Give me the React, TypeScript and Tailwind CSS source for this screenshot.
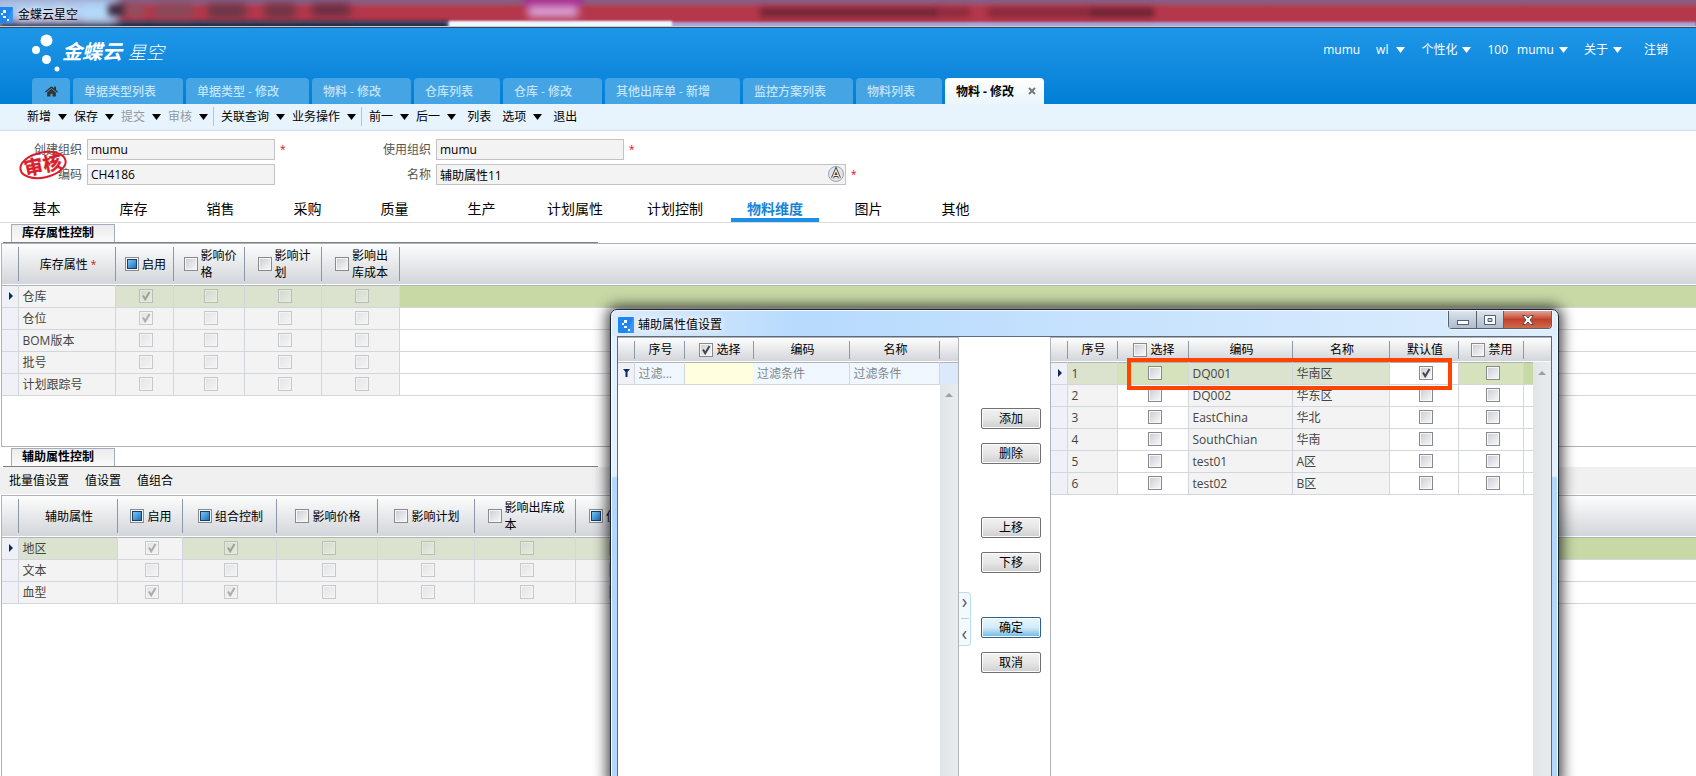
import React from "react";
import { FaHome } from "react-icons/fa";

const FONT = "font-['Open_Sans','Noto_Sans_CJK_SC',sans-serif]";

const openTabs = [
  { name: "单据类型列表", width: "w-[110px]" },
  { name: "单据类型 - 修改", width: "w-[123px]" },
  { name: "物料 - 修改", width: "w-[99px]" },
  { name: "仓库列表", width: "w-[86px]" },
  { name: "仓库 - 修改", width: "w-[99px]" },
  { name: "其他出库单 - 新增", width: "w-[135px]" },
  { name: "监控方案列表", width: "w-[110px]" },
  { name: "物料列表", width: "w-[86px]" },
];

const toolbar = [
  [
    { name: "新增", menu: true },
    { name: "保存", menu: true },
    { name: "提交", menu: true, off: true },
    { name: "审核", menu: true, off: true },
  ],
  [
    { name: "关联查询", menu: true },
    { name: "业务操作", menu: true },
  ],
  [
    { name: "前一", menu: true },
    { name: "后一", menu: true },
    { name: "列表" },
    { name: "选项", menu: true },
    { name: "退出" },
  ],
];

const sections = [
  "基本",
  "库存",
  "销售",
  "采购",
  "质量",
  "生产",
  "计划属性",
  "计划控制",
  "物料维度",
  "图片",
  "其他",
];

type Column = {
  name: string;
  width: string;
  box?: "off" | "on" | "mixed";
  text?: string;
  required?: boolean;
};

const stockColumns: Column[] = [
  { name: "库存属性", width: "w-[97px]", required: true },
  { name: "启用", width: "w-[58px]", box: "mixed" },
  { name: "影响价格", width: "w-[71px]", box: "off", text: "w-9" },
  { name: "影响计划", width: "w-[77px]", box: "off", text: "w-9" },
  { name: "影响出库成本", width: "w-[78px]", box: "off", text: "w-9" },
];

const stockRows = [
  { name: "仓库", checks: [true, false, false, false] },
  { name: "仓位", checks: [true, false, false, false] },
  { name: "BOM版本", checks: [false, false, false, false] },
  { name: "批号", checks: [false, false, false, false] },
  { name: "计划跟踪号", checks: [false, false, false, false] },
];

const auxColumns: Column[] = [
  { name: "辅助属性", width: "w-[99px]" },
  { name: "启用", width: "w-[65px]", box: "mixed" },
  { name: "组合控制", width: "w-[94px]", box: "mixed" },
  { name: "影响价格", width: "w-[101px]", box: "off" },
  { name: "影响计划", width: "w-[97px]", box: "off" },
  { name: "影响出库成本", width: "w-[101px]", box: "off", text: "w-[60px]" },
  { name: "值必录", width: "w-[78px]", box: "mixed" },
];

const auxRows = [
  { name: "地区", checks: [true, true, false, false, false, false] },
  { name: "文本", checks: [false, false, false, false, false, false] },
  { name: "血型", checks: [true, true, false, false, false, false] },
];

const sourceColumns: Column[] = [
  { name: "序号", width: "w-[50px]" },
  { name: "选择", width: "w-[69px]", box: "on" },
  { name: "编码", width: "w-[96px]" },
  { name: "名称", width: "w-[90px]" },
];

const valueColumns: Column[] = [
  { name: "序号", width: "w-[50px]" },
  { name: "选择", width: "w-[71px]", box: "off" },
  { name: "编码", width: "w-[104px]" },
  { name: "名称", width: "w-[97px]" },
  { name: "默认值", width: "w-[69px]" },
  { name: "禁用", width: "w-[65px]", box: "off" },
];

const valueRows = [
  { code: "DQ001", name: "华南区", preset: true },
  { code: "DQ002", name: "华东区", preset: false },
  { code: "EastChina", name: "华北", preset: false },
  { code: "SouthChian", name: "华南", preset: false },
  { code: "test01", name: "A区", preset: false },
  { code: "test02", name: "B区", preset: false },
];

const Caret = () => (
  <svg viewBox="0 0 9 6" className="h-[6px] w-[9px]" fill="currentColor">
    <path d="M0 0h9L4.5 6z" />
  </svg>
);

const Star = () => (
  <span className="text-[10px] leading-[17px] text-red-600">*</span>
);

const AppIcon = ({ className }: { className: string }) => (
  <svg viewBox="0 0 16 16" className={className}>
    <rect width="16" height="16" rx="1" fill="#1f86ee" />
    <path d="M16 0v16H9z" fill="#4ba1f6" opacity=".5" />
    <g fill="#fff">
      <rect x="6" y="3" width="3" height="3" />
      <rect x="4" y="6" width="2" height="2" />
      <rect x="6" y="9" width="3" height="2" />
      <rect x="10" y="12" width="2" height="2" />
    </g>
  </svg>
);

const Check = ({
  label,
  state = "off",
  disabled = false,
}: {
  label: string;
  state?: "off" | "on" | "mixed";
  disabled?: boolean;
}) => (
  <span
    className={`relative inline-block size-[14px] shrink-0 ${disabled ? "opacity-40" : ""}`}
  >
    <input
      type="checkbox"
      aria-label={label}
      defaultChecked={state === "on"}
      disabled={disabled}
      className="block size-[14px] appearance-none border border-[#8a8a8a] bg-linear-to-br from-[#c9ccd4] to-[#fafafa] shadow-[inset_0_0_0_1px_#f6f6f6]"
    />
    {state === "mixed" && (
      <span className="pointer-events-none absolute inset-[2px] border border-[#15406d] bg-linear-to-br from-[#7cc4f0] to-[#1273c4]" />
    )}
    {state === "on" && (
      <svg
        viewBox="0 0 14 14"
        className="pointer-events-none absolute inset-0"
        fill="none"
        stroke={disabled ? "#444" : "#45474d"}
        strokeWidth="2"
      >
        <path d="M4 6.5l2.2 3.8L10.5 3" />
      </svg>
    )}
  </span>
);

const HeadRow = ({ columns, tall }: { columns: Column[]; tall?: boolean }) => {
  const size = tall ? "h-[34px]" : "h-[18px]";
  return (
    <thead>
      <tr
        className={`border-b border-[#b0b3b8] bg-linear-to-b from-[#fdfdfd] to-[#d2d5da] text-black ${tall ? "h-[41px]" : "h-[24px]"}`}
      >
        <th className="w-[16px] p-0">
          <div className={`-mr-px border-r border-[#8d97a5] ${size}`} />
        </th>
        {columns.map((col) => (
          <th key={col.name} className={`p-0 font-normal ${col.width}`}>
            <div
              className={`-mr-px flex items-center justify-center gap-[3px] border-r border-[#8d97a5] pl-[3px] leading-[17px] ${size}`}
            >
              {col.box && <Check label={col.name} state={col.box} />}
              <span className={`text-left ${col.text ?? "whitespace-nowrap"}`}>
                {col.name}
              </span>
              {col.required && <Star />}
            </div>
          </th>
        ))}
        <th className="p-0" />
      </tr>
    </thead>
  );
};

const Marker = ({ show }: { show: boolean }) => (
  <td className="border-r border-[#d3d6dc] bg-[#f0f1f6] p-0">
    {show && (
      <svg viewBox="0 0 4 8" className="ml-[7px] h-[8px] w-[4px]">
        <path d="M0 0l4 4-4 4z" fill="#0a2a66" />
      </svg>
    )}
  </td>
);

const CheckGrid = ({
  columns,
  rows,
  plainCell,
}: {
  columns: Column[];
  rows: { name: string; checks: boolean[] }[];
  plainCell: number;
}) => (
  <table className="w-full table-fixed border-collapse text-[#444]">
    <HeadRow columns={columns} tall />
    <tbody>
      {rows.map((row, i) => (
        <tr key={row.name} className="h-[22px] border-b border-[#d3d6dc]">
          <Marker show={i === 0} />
          <td
            className={`border-r border-[#d3d6dc] p-0 pl-1 ${i === 0 && plainCell !== 0 ? "bg-[#dbe3cf]" : "bg-[#f3f3f3]"}`}
          >
            {row.name}
          </td>
          {row.checks.map((checked, c) => (
            <td
              key={c}
              className={`border-r border-[#d3d6dc] p-0 pl-1 ${i === 0 && plainCell !== c + 1 ? "bg-[#dbe3cf]" : "bg-[#f3f3f3]"}`}
            >
              <div className="flex justify-center">
                <Check
                  label={`${row.name} ${columns[c + 1].name}`}
                  state={checked ? "on" : "off"}
                  disabled
                />
              </div>
            </td>
          ))}
          <td className={i === 0 ? "bg-[#c8d9a6] p-0" : "p-0"} />
        </tr>
      ))}
    </tbody>
  </table>
);

const SectionTab = ({ title }: { title: string }) => (
  <div className="pl-[3px]">
    <h2 className="ml-2 h-[18px] w-[104px] border border-b-0 border-[#a3adb8] bg-linear-to-b from-[#ececee] to-[#fafafa] pl-[10px] text-[12px] leading-[16px] font-bold text-black">
      {title}
    </h2>
    <div className="h-px w-[595px] bg-[#808080]" />
  </div>
);

// Desktop showing through the glass title bar
const TitleBar = () => (
  <div className="relative h-[28px] overflow-hidden border-b border-[#3b4658] bg-[#b5374b]">
    <div className="absolute inset-0 bg-linear-to-b from-[#80608c] via-[#b5374b] via-30% to-[#b5374b]" />
    <div className="absolute inset-x-0 top-[22px] h-[6px] bg-[#a9a5d8] blur-[1px]" />
    <div className="absolute top-[21px] left-0 h-[10px] w-[448px] bg-[#252c48] blur-[2px]" />
    <div className="absolute top-[21px] left-[449px] h-[8px] w-[223px] bg-[#eefaff] blur-[1px]" />
    <div className="absolute -top-1 -left-2 h-[26px] w-[126px] bg-[#a9c4ea] blur-[5px]" />
    <div className="absolute top-[6px] left-[80px] h-[14px] w-[34px] bg-[#b4dcfb] blur-[4px]" />
    <div className="absolute top-[4px] left-[108px] h-[12px] w-[18px] bg-[#3f2b40] blur-[3px]" />
    <div className="absolute top-[4px] left-[126px] h-[13px] w-[18px] bg-[#8d5264] blur-[4px]" />
    <div className="absolute top-[4px] left-[155px] h-[14px] w-[38px] bg-[#854b5c] blur-[4px]" />
    <div className="absolute top-[4px] left-[208px] h-[14px] w-[38px] bg-[#673849] blur-[4px]" />
    <div className="absolute top-[4px] left-[265px] h-[14px] w-[30px] bg-[#6b3546] blur-[4px]" />
    <div className="absolute top-[4px] left-[312px] h-[12px] w-[38px] bg-[#633043] blur-[4px]" />
    <div className="absolute -top-1 left-[524px] h-[12px] w-[58px] bg-[#a72b8b] blur-[3px]" />
    <div className="absolute top-[6px] left-[528px] h-[11px] w-[50px] bg-[#dba8e2] blur-[4px]" />
    <div className="absolute top-[8px] left-[760px] h-[9px] w-[180px] bg-[#6e2535] blur-[3px]" />
    <div className="absolute top-[8px] left-[940px] h-[9px] w-[30px] bg-[#8b2b3d] blur-[3px]" />
    <div className="absolute top-[8px] left-[988px] h-[9px] w-[100px] bg-[#84293a] blur-[3px]" />
    <div className="absolute top-[8px] left-[1088px] h-[9px] w-[66px] bg-[#692333] blur-[3px]" />
    <div className="absolute inset-x-0 bottom-0 h-px bg-[#c7cdd8]" />
    <div className="relative flex pt-[7px]">
      <AppIcon className="-ml-[3px] size-[16px]" />
      <h1 className="ml-[5px] text-[12px] leading-[16px] text-black [text-shadow:0_0_6px_#fff,0_0_10px_#fff]">
        金蝶云星空
      </h1>
    </div>
  </div>
);

const Header = () => (
  <header className="flex h-[76px] flex-col justify-between bg-linear-to-b from-[#1e96e8] to-[#007fd6]">
    <div className="flex items-start justify-between pr-7">
      <div className="flex pt-[5px] pl-[32px] text-white">
        <svg viewBox="0 0 30 40" className="h-[40px] w-[30px]" fill="#fff">
          <circle cx="14.5" cy="7.5" r="6" />
          <circle cx="4" cy="17" r="4" />
          <circle cx="14.5" cy="26.5" r="4.5" />
          <circle cx="25" cy="36" r="2.5" />
        </svg>
        <span className="pt-[7px] text-[20px] leading-[24px] font-bold italic">
          金蝶云
        </span>
        <span className="pt-[7px] pl-[6px] text-[18px] leading-[24px] font-light italic">
          星空
        </span>
      </div>
      <nav className="flex items-center pt-[14px] leading-[16px] text-white">
        <span>mumu</span>
        <button className="ml-4 flex items-center gap-2">
          wl <Caret />
        </button>
        <button className="ml-4 flex items-center gap-[5px]">
          个性化 <Caret />
        </button>
        <button className="ml-4 flex items-center gap-[5px]">
          <span className="pr-1">100</span> mumu <Caret />
        </button>
        <button className="ml-4 flex items-center gap-[5px]">
          关于 <Caret />
        </button>
        <a href="#logout" className="ml-[22px]">
          注销
        </a>
      </nav>
    </div>
    <div className="flex gap-[3px] pl-[32px]">
      <button
        aria-label="首页"
        className="flex h-[26px] w-[38px] items-center justify-center rounded-t bg-[#45a4e4] text-[#333]"
      >
        <FaHome className="size-[13px]" />
      </button>
      {openTabs.map((tab) => (
        <button
          key={tab.name}
          className={`h-[26px] rounded-t bg-[#45a4e4] pl-[11px] text-left font-medium whitespace-nowrap text-[#c3e4fa] ${tab.width}`}
        >
          {tab.name}
        </button>
      ))}
      <div className="flex h-[26px] w-[99px] items-center justify-between rounded-t bg-linear-to-b from-white to-[#eaf5fc] pr-[8px] pl-[11px] font-bold text-black">
        物料 - 修改
        <button aria-label="关闭">
          <svg viewBox="0 0 8 8" className="size-[8px]" stroke="#777">
            <path d="M1 1l6 6M7 1L1 7" strokeWidth="2" />
          </svg>
        </button>
      </div>
    </div>
  </header>
);

const Stamp = () => (
  <svg
    viewBox="0 0 52 32"
    className="pointer-events-none absolute top-[18px] left-[17px] h-[32px] w-[52px]"
  >
    <g transform="rotate(-12 26 16)">
      <ellipse
        cx="26"
        cy="16"
        rx="23"
        ry="12.5"
        fill="none"
        stroke="#d81e2c"
        strokeWidth="2"
      />
      <text
        x="26"
        y="23"
        textAnchor="middle"
        fontSize="19"
        fontWeight="bold"
        fill="#d81e2c"
        stroke="#d81e2c"
        strokeWidth=".4"
      >
        审核
      </text>
    </g>
  </svg>
);

const field =
  "h-[21px] border border-[#c3c3c3] bg-[#f3f3f3] px-[3px] text-[12px] text-black";

const ItemForm = () => (
  <form className="relative grid grid-cols-[82px_188px_151px_1fr] items-center gap-x-[5px] gap-y-1 pt-2 text-[#555]">
    <label htmlFor="createOrg" className="text-right">
      创建组织
    </label>
    <input id="createOrg" readOnly defaultValue="mumu" className={field} />
    <div className="flex justify-between">
      <Star />
      <label htmlFor="useOrg">使用组织</label>
    </div>
    <div className="flex items-center gap-[5px]">
      <input
        id="useOrg"
        readOnly
        defaultValue="mumu"
        className={`w-[188px] ${field}`}
      />
      <Star />
    </div>
    <label htmlFor="code" className="text-right">
      编码
    </label>
    <input id="code" readOnly defaultValue="CH4186" className={field} />
    <label htmlFor="name" className="text-right">
      名称
    </label>
    <div className="flex items-center gap-[5px]">
      <div className="relative">
        <input
          id="name"
          readOnly
          defaultValue="辅助属性11"
          className={`block w-[410px] ${field}`}
        />
        <svg
          viewBox="0 0 16 16"
          className="absolute top-[2px] right-[2px] size-[16px]"
        >
          <circle cx="8" cy="8" r="7.5" fill="#dfe5ec" stroke="#9aa5b1" />
          <path
            d="M4.500 12L8 4l3.500 8M6 9.500h4"
            fill="none"
            stroke="#4a4038"
            strokeWidth="3"
          />
          <path
            d="M4.500 12L8 4l3.500 8M6 9.500h4"
            fill="none"
            stroke="#f5e9d6"
            strokeWidth="1.200"
          />
        </svg>
      </div>
      <Star />
    </div>
    <Stamp />
  </form>
);

const DialogButton = ({
  name,
  primary,
}: {
  name: string;
  primary?: boolean;
}) => (
  <button
    className={`h-[21px] w-[60px] rounded-[2px] border leading-[18px] text-black shadow-[inset_0_0_0_1px_#fcfcfc] ${
      primary
        ? "border-[#2c628b] bg-linear-to-b from-[#e9f6fd] from-0% via-[#d3ecfa] via-50% to-[#6cb6e0] to-100%"
        : "border-[#707070] bg-linear-to-b from-[#f2f2f2] from-0% via-[#e6e6e6] via-50% to-[#cfcfcf] to-100%"
    }`}
  >
    {name}
  </button>
);

const Scrollbar = ({ top }: { top: string }) => (
  <div
    className={`absolute right-0 bottom-0 w-[18px] bg-linear-to-r from-[#e1e5e8] to-[#e9ecef] ${top}`}
  >
    <svg viewBox="0 0 8 4" className="mx-auto mt-[9px] h-[4px] w-[8px]">
      <path d="M4 0l4 4H0z" fill="#9b9fa3" />
    </svg>
  </div>
);

const filterInput =
  "block h-[21px] w-full px-1 text-[12px] placeholder:text-[#80868c]";

const SourcePanel = () => (
  <div className="relative w-[341px] border-t border-r border-[#b0b3b8] bg-white">
    <table className="w-full table-fixed border-collapse">
      <HeadRow columns={sourceColumns} />
      <tbody>
        <tr className="h-[22px] border-b border-[#d3d6dc] bg-[#f0f7fe]">
          <td className="border-r border-[#d3d6dc] bg-[#f0f1f6] p-0">
            <svg viewBox="0 0 7 8" className="ml-[5px] h-[8px] w-[7px]">
              <path d="M0 0h7L4.500 3v5H2.500V3z" fill="#0a2a66" />
            </svg>
          </td>
          <td className="border-r border-[#d3d6dc] p-0">
            <input
              aria-label="序号"
              placeholder="过滤..."
              className={filterInput}
            />
          </td>
          <td className="bg-[#ffffdf] p-0" />
          <td className="border-r border-[#d3d6dc] p-0">
            <input
              aria-label="编码"
              placeholder="过滤条件"
              className={filterInput}
            />
          </td>
          <td className="border-r border-[#d3d6dc] p-0">
            <input
              aria-label="名称"
              placeholder="过滤条件"
              className={filterInput}
            />
          </td>
          <td className="bg-[#dce9fa] p-0" />
        </tr>
      </tbody>
    </table>
    <Scrollbar top="top-[46px]" />
  </div>
);

const ValuePanel = () => (
  <div className="relative w-[501px] border-t border-l border-[#b0b3b8] bg-white">
    <table className="w-full table-fixed border-collapse text-[#444]">
      <HeadRow columns={valueColumns} />
      <tbody>
        {valueRows.map((row, i) => {
          const grey = i === 0 ? "bg-[#dbe3cf]" : "bg-[#f3f3f3]";
          const open = i === 0 ? "bg-[#d5e2bb]" : "bg-white";
          const cell = "border-r border-[#d3d6dc] p-0 pl-1";
          return (
            <tr key={row.code} className="h-[22px] border-b border-[#d3d6dc]">
              <Marker show={i === 0} />
              <td className={`${cell} ${grey}`}>{i + 1}</td>
              <td className={`${cell} ${open}`}>
                <div className="flex justify-center">
                  <Check label={`选择 ${row.code}`} />
                </div>
              </td>
              <td className={`${cell} ${grey}`}>{row.code}</td>
              <td className={`${cell} ${grey}`}>{row.name}</td>
              <td className={`${cell} bg-white`}>
                <div className="flex justify-center">
                  <Check
                    label={`默认值 ${row.code}`}
                    state={row.preset ? "on" : "off"}
                  />
                </div>
              </td>
              <td className={`${cell} ${open}`}>
                <div className="flex justify-center">
                  <Check label={`禁用 ${row.code}`} />
                </div>
              </td>
              <td className={i === 0 ? "bg-[#c8d9a6] p-0" : "p-0"} />
            </tr>
          );
        })}
      </tbody>
    </table>
    <Scrollbar top="top-[24px]" />
    <div className="pointer-events-none absolute top-[20px] left-[76px] h-[32px] w-[325px] border-4 border-[#ff4400]" />
  </div>
);

const ValueDialog = () => (
  <div
    role="dialog"
    aria-label="辅助属性值设置"
    className="absolute top-[309px] -bottom-2 left-[610px] flex w-[949px] flex-col rounded-t-[7px] border border-[#1c2733] bg-linear-to-b from-[#e3f0fd] from-[166px] to-[#b4d8fc] to-[168px] px-[6px] shadow-[inset_0_0_0_1px_#f4faff,0_0_14px_3px_rgba(0,0,0,0.75)]"
  >
    <div className="-mx-[5px] mt-px flex h-[25px] items-start justify-between rounded-t-[6px] bg-linear-to-r from-[#dcebfb] via-[#b7dafd] via-20% to-[#deeefd] pr-[5px] pl-[6px]">
      <div className="flex items-center gap-1 pt-[6px]">
        <AppIcon className="size-[16px]" />
        <span className="text-[12px] leading-[16px] text-black [text-shadow:0_0_6px_#fff,0_0_10px_#fff]">
          辅助属性值设置
        </span>
      </div>
      <div className="flex h-[18px] rounded-b-[4px] border border-t-0 border-[#56636f] bg-white/60 shadow-[0_0_0_1px_#ffffff80]">
        <button
          aria-label="最小化"
          className="flex w-[28px] items-center justify-center border-r border-[#56636f] bg-linear-to-b from-[#dde5ee] via-[#c3cfdc] to-[#aebdce]"
        >
          <svg viewBox="0 0 12 10" className="h-[10px] w-[12px]">
            <rect
              x=".5"
              y="5.500"
              width="11"
              height="4"
              fill="#fff"
              stroke="#555f6b"
            />
          </svg>
        </button>
        <button
          aria-label="最大化"
          className="flex w-[27px] items-center justify-center border-r border-[#56636f] bg-linear-to-b from-[#dde5ee] via-[#c3cfdc] to-[#aebdce]"
        >
          <svg viewBox="0 0 12 10" className="h-[10px] w-[12px]">
            <path
              d="M.5.5h11v9H.5zM4 3.500h4v3H4z"
              fill="#fff"
              fillRule="evenodd"
              stroke="#555f6b"
            />
          </svg>
        </button>
        <button
          aria-label="关闭"
          className="flex w-[47px] items-center justify-center rounded-br-[3px] bg-linear-to-b from-[#e0a397] from-0% via-[#c1402a] via-50% to-[#cf6a4b] to-100%"
        >
          <svg viewBox="0 0 12 10" className="h-[10px] w-[12px]">
            <path
              d="M.5.5h3.300L6 3l2.200-2.500h3.300L8 5l3.500 4.500H8.200L6 7 3.800 9.500H.5L4 5z"
              fill="#fff"
              stroke="#5a4a4e"
            />
          </svg>
        </button>
      </div>
    </div>
    <div className="flex min-h-0 flex-1 border border-b-0 border-[#5b6b7b] bg-white">
      <SourcePanel />
      <div className="relative flex-1 pt-[71px] pl-[22px]">
        <div className="flex flex-col gap-[14px]">
          <DialogButton name="添加" />
          <DialogButton name="删除" />
        </div>
        <div className="mt-[53px] flex flex-col gap-[14px]">
          <DialogButton name="上移" />
          <DialogButton name="下移" />
        </div>
        <div className="mt-[44px] flex flex-col gap-[14px]">
          <DialogButton name="确定" primary />
          <DialogButton name="取消" />
        </div>
        <div className="absolute top-[255px] left-0 flex h-[54px] w-[12px] flex-col items-center justify-around rounded-r border border-l-0 border-[#bcdcf3] bg-[#f2faff] text-[#666]">
          <button aria-label="展开右侧">
            <svg
              viewBox="0 0 5 8"
              className="h-[8px] w-[5px]"
              fill="none"
              stroke="currentColor"
            >
              <path d="M1 0l3 4-3 4" strokeWidth="1.500" />
            </svg>
          </button>
          <span className="h-px w-[8px] bg-[#c4ccd2]" />
          <button aria-label="展开左侧">
            <svg
              viewBox="0 0 5 8"
              className="h-[8px] w-[5px]"
              fill="none"
              stroke="currentColor"
            >
              <path d="M4 0L1 4l3 4" strokeWidth="1.500" />
            </svg>
          </button>
        </div>
      </div>
      <ValuePanel />
    </div>
  </div>
);

const App = () => {
  return (
    <div
      className={`relative flex h-screen flex-col overflow-hidden bg-white text-[12px] leading-[17px] ${FONT}`}
    >
      <TitleBar />
      <Header />

      <div className="flex h-[27px] items-center border-b border-[#c9dff7] bg-[#e8f4fd] pb-px pl-[20px] text-black">
        {toolbar.map((group, g) => (
          <div
            key={g}
            className={`flex items-center gap-[7px] pr-[5px] pl-[7px] ${g < 2 ? "border-r border-[#b4c3d6]" : ""}`}
          >
            {group.map((item) => (
              <button
                key={item.name}
                className={`flex items-center gap-[7px] leading-[19px] ${item.menu ? "" : "px-1"}`}
              >
                <span className={item.off ? "text-[#9299a0]" : ""}>
                  {item.name}
                </span>
                {item.menu && <Caret />}
              </button>
            ))}
          </div>
        ))}
      </div>

      <ItemForm />

      <nav className="mt-[12px] flex h-[26px] gap-3 border-b border-[#dcdcdc] pl-[9px] text-[14px] text-black">
        {sections.map((name) => (
          <a
            key={name}
            href="#section"
            className={`min-w-[75px] px-4 text-center leading-[24px] ${
              name === "物料维度"
                ? "border-b-4 border-[#1a8fe3] font-bold text-[#1583d8]"
                : ""
            }`}
          >
            {name}
          </a>
        ))}
      </nav>

      <div className="pt-px">
        <SectionTab title="库存属性控制" />
        <div className="ml-px h-[204px] border border-r-0 border-[#b0b3b8]">
          <CheckGrid columns={stockColumns} rows={stockRows} plainCell={0} />
        </div>
      </div>

      <div className="flex min-h-0 flex-1 flex-col pt-px">
        <SectionTab title="辅助属性控制" />
        <div className="flex h-[27px] items-center gap-4 bg-[#f0f0f0] pb-px pl-[9px] text-black">
          <button>批量值设置</button>
          <button>值设置</button>
          <button>值组合</button>
        </div>
        <div className="mt-px ml-px flex-1 border-t border-l border-[#b0b3b8]">
          <CheckGrid columns={auxColumns} rows={auxRows} plainCell={1} />
        </div>
      </div>

      <ValueDialog />
    </div>
  );
};

export default App;
